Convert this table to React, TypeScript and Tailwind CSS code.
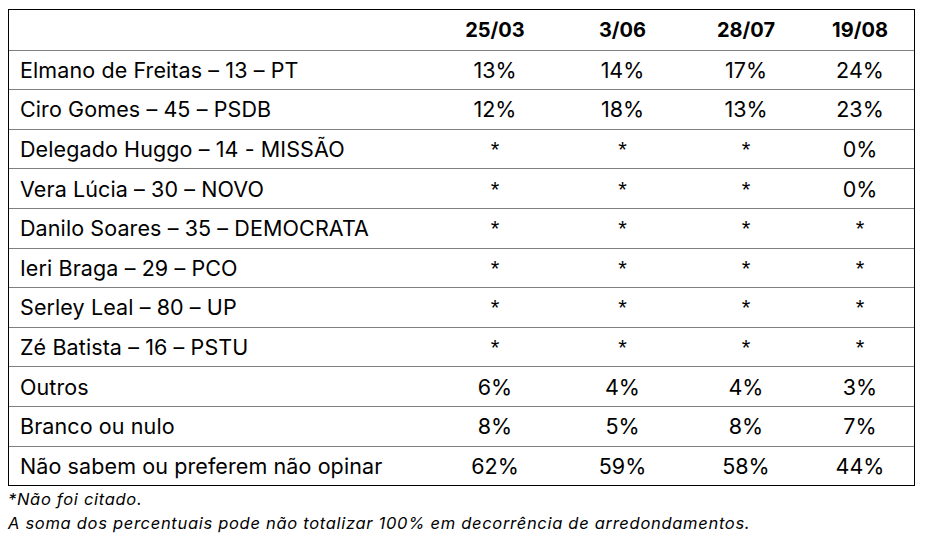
const rows: [string, string, string, string, string][] = [
  ["Elmano de Freitas – 13 – PT", "13%", "14%", "17%", "24%"],
  ["Ciro Gomes – 45 – PSDB", "12%", "18%", "13%", "23%"],
  ["Delegado Huggo – 14 - MISSÃO", "*", "*", "*", "0%"],
  ["Vera Lúcia – 30 – NOVO", "*", "*", "*", "0%"],
  ["Danilo Soares – 35 – DEMOCRATA", "*", "*", "*", "*"],
  ["Ieri Braga – 29 – PCO", "*", "*", "*", "*"],
  ["Serley Leal – 80 – UP", "*", "*", "*", "*"],
  ["Zé Batista – 16 – PSTU", "*", "*", "*", "*"],
  ["Outros", "6%", "4%", "4%", "3%"],
  ["Branco ou nulo", "8%", "5%", "8%", "7%"],
  ["Não sabem ou preferem não opinar", "62%", "59%", "58%", "44%"],
];

const grid = "grid grid-cols-[422px_128px_127px_120px_1fr] items-center";

export default function App() {
  return (
    <div className="w-[934px] h-[540px] bg-white pl-[8px] pt-[9px] font-['Inter','Liberation_Sans',sans-serif] text-black">
      {/* tabela */}
      <div className="w-[907px] border border-black">
        <div className={`${grid} h-[39.6px] text-[20px] font-bold pt-[1px]`}>
          <div />
          <div className="text-center">25/03</div>
          <div className="text-center">3/06</div>
          <div className="text-center">28/07</div>
          <div className="text-center">19/08</div>
        </div>
        {rows.map((r) => (
          <div key={r[0]} className={`${grid} h-[39.6px] border-t border-[#808080] text-[21.5px]`}>
            <div className="pl-[11px] tracking-[0.1px]">{r[0]}</div>
            {r.slice(1).map((v, i) =>
              v === "*" ? (
                <div key={i} className="text-center font-['Liberation_Sans',sans-serif] text-[22px] leading-none pt-[2px]">*</div>
              ) : (
                <div key={i} className="text-center">{v}</div>
              )
            )}
          </div>
        ))}
      </div>

      {/* notas */}
      <div className="italic text-[16.5px] leading-[24px] tracking-[0.7px] pt-[1px]">
        <p>*Não foi citado.</p>
        <p>A soma dos percentuais pode não totalizar 100% em decorrência de arredondamentos.</p>
      </div>
    </div>
  );
}
